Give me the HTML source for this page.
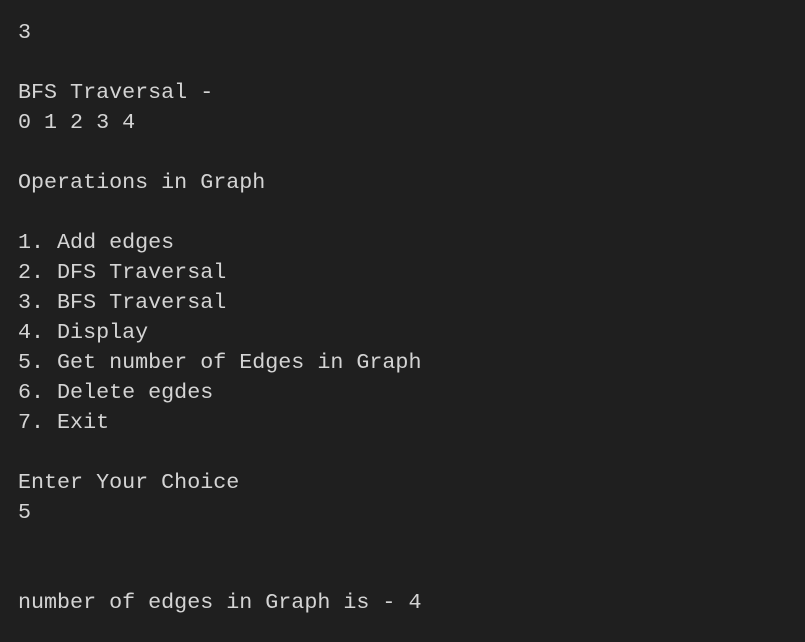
<!DOCTYPE html>
<html><head><style>
html,body{margin:0;padding:0;background:#1f1f1f;width:805px;height:642px;overflow:hidden}
pre{margin:0;padding:18px 0 0 18px;font-family:"Liberation Mono","DejaVu Sans Mono",monospace;font-size:21.7px;line-height:30px;color:#d4d4d4}
</style></head><body><pre>3

BFS Traversal -
0 1 2 3 4

Operations in Graph

1. Add edges
2. DFS Traversal
3. BFS Traversal
4. Display
5. Get number of Edges in Graph
6. Delete egdes
7. Exit

Enter Your Choice
5


number of edges in Graph is - 4</pre></body></html>
